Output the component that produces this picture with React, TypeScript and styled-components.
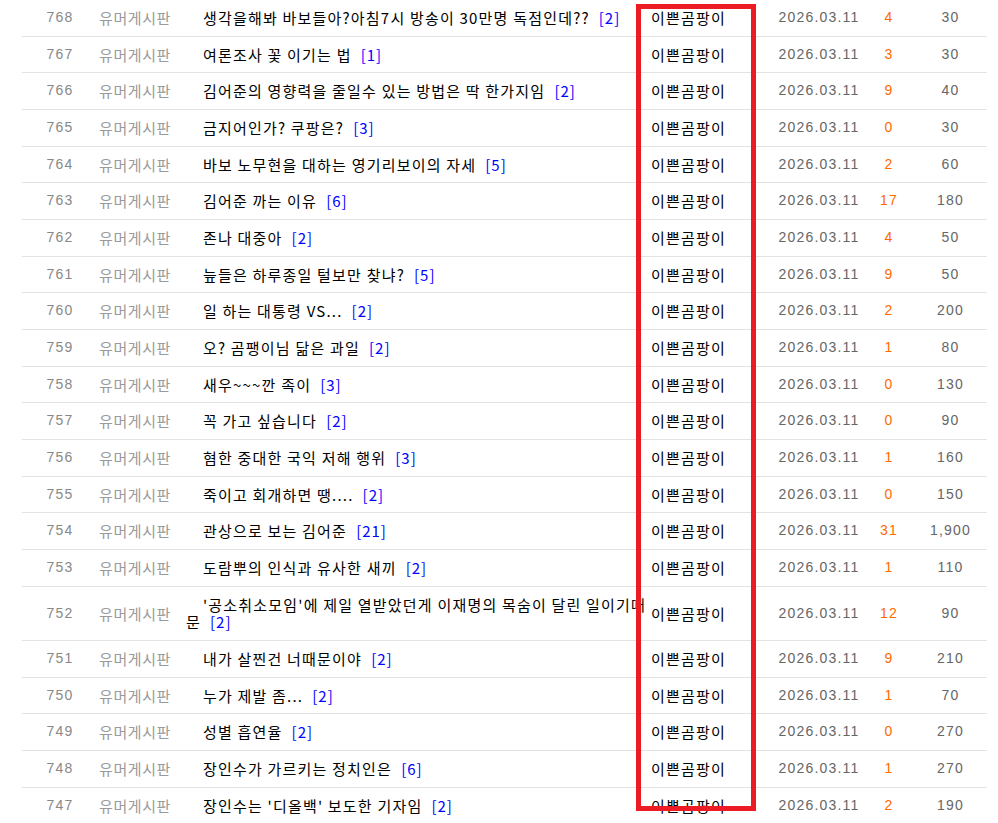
import React from "react";
import styled, { createGlobalStyle } from "styled-components";

const GlobalStyle = createGlobalStyle`
  html, body { margin: 0; padding: 0; background: #fff; }
  body { font-family: "Noto Sans CJK KR", sans-serif; }
`;

const Page = styled.div`
  position: relative;
  padding-left: 22px;
  width: 965px;
`;

const Board = styled.div`
  display: flex;
  flex-direction: column;
`;

const Row = styled.div`
  display: grid;
  grid-template-columns: 76px 74px 478px 124px 90px 50px 73px;
  align-items: center;
  border-bottom: 1px solid #e3e3e3;
  padding: 9px 0;
  line-height: 17.67px;
  font-size: 15px;
`;

const NumCell = styled.div<{ $color?: string }>`
  text-align: center;
  font-family: "Liberation Sans", Arial, sans-serif;
  font-size: 14px;
  letter-spacing: 1.2px;
  color: ${(p) => p.$color || "#888"};
  white-space: nowrap;
`;

const CatCell = styled.div`
  text-align: center;
  color: #9a9a9a;
  letter-spacing: 0.6px;
  white-space: nowrap;
`;

const TitleCell = styled.div`
  padding-left: 14px;
  text-indent: 17px;
  color: #000;
  letter-spacing: 1.2px;
`;

const Reply = styled.span`
  color: #0000ff;
  margin-left: 9px;
  letter-spacing: 1px;
  white-space: nowrap;
`;

const WriterCell = styled.div`
  padding-left: 1px;
  color: #000;
  letter-spacing: 1.2px;
  white-space: nowrap;
`;

const Highlight = styled.div`
  position: absolute;
  left: 636px;
  top: 4px;
  width: 120px;
  height: 807px;
  box-sizing: border-box;
  border: 5px solid #ed1c24;
  pointer-events: none;
`;

type Post = { no: number; title: string; reply: number; comments: number; views: string };

const posts: Post[] = [
  { no: 768, title: "생각을해봐 바보들아?아침7시 방송이 30만명 독점인데??", reply: 2, comments: 4, views: "30" },
  { no: 767, title: "여론조사 꽃 이기는 법", reply: 1, comments: 3, views: "30" },
  { no: 766, title: "김어준의 영향력을 줄일수 있는 방법은 딱 한가지임", reply: 2, comments: 9, views: "40" },
  { no: 765, title: "금지어인가? 쿠팡은?", reply: 3, comments: 0, views: "30" },
  { no: 764, title: "바보 노무현을 대하는 영기리보이의 자세", reply: 5, comments: 2, views: "60" },
  { no: 763, title: "김어준 까는 이유", reply: 6, comments: 17, views: "180" },
  { no: 762, title: "존나 대중아", reply: 2, comments: 4, views: "50" },
  { no: 761, title: "늪들은 하루종일 털보만 찾냐?", reply: 5, comments: 9, views: "50" },
  { no: 760, title: "일 하는 대통령 VS...", reply: 2, comments: 2, views: "200" },
  { no: 759, title: "오? 곰팽이님 닮은 과일", reply: 2, comments: 1, views: "80" },
  { no: 758, title: "새우~~~깐 족이", reply: 3, comments: 0, views: "130" },
  { no: 757, title: "꼭 가고 싶습니다", reply: 2, comments: 0, views: "90" },
  { no: 756, title: "혐한 중대한 국익 저해 행위", reply: 3, comments: 1, views: "160" },
  { no: 755, title: "죽이고 회개하면 땡....", reply: 2, comments: 0, views: "150" },
  { no: 754, title: "관상으로 보는 김어준", reply: 21, comments: 31, views: "1,900" },
  { no: 753, title: "도람뿌의 인식과 유사한 새끼", reply: 2, comments: 1, views: "110" },
  { no: 752, title: "'공소취소모임'에 제일 열받았던게 이재명의 목숨이 달린 일이기때문", reply: 2, comments: 12, views: "90" },
  { no: 751, title: "내가 살찐건 너때문이야", reply: 2, comments: 9, views: "210" },
  { no: 750, title: "누가 제발 좀...", reply: 2, comments: 1, views: "70" },
  { no: 749, title: "성별 흡연율", reply: 2, comments: 0, views: "270" },
  { no: 748, title: "장인수가 가르키는 정치인은", reply: 6, comments: 1, views: "270" },
  { no: 747, title: "장인수는 '디올백' 보도한 기자임", reply: 2, comments: 2, views: "190" },
];

export default function App() {
  return (
    <>
      <GlobalStyle />
      <Page>
        <Board>
          {posts.map((p) => (
            <Row key={p.no}>
              <NumCell>{p.no}</NumCell>
              <CatCell>유머게시판</CatCell>
              <TitleCell>
                {p.title}
                <Reply>[{p.reply}]</Reply>
              </TitleCell>
              <WriterCell>이쁜곰팡이</WriterCell>
              <NumCell $color="#666">2026.03.11</NumCell>
              <NumCell $color="#ff6a00">{p.comments}</NumCell>
              <NumCell $color="#666">{p.views}</NumCell>
            </Row>
          ))}
        </Board>
        <Highlight />
      </Page>
    </>
  );
}
